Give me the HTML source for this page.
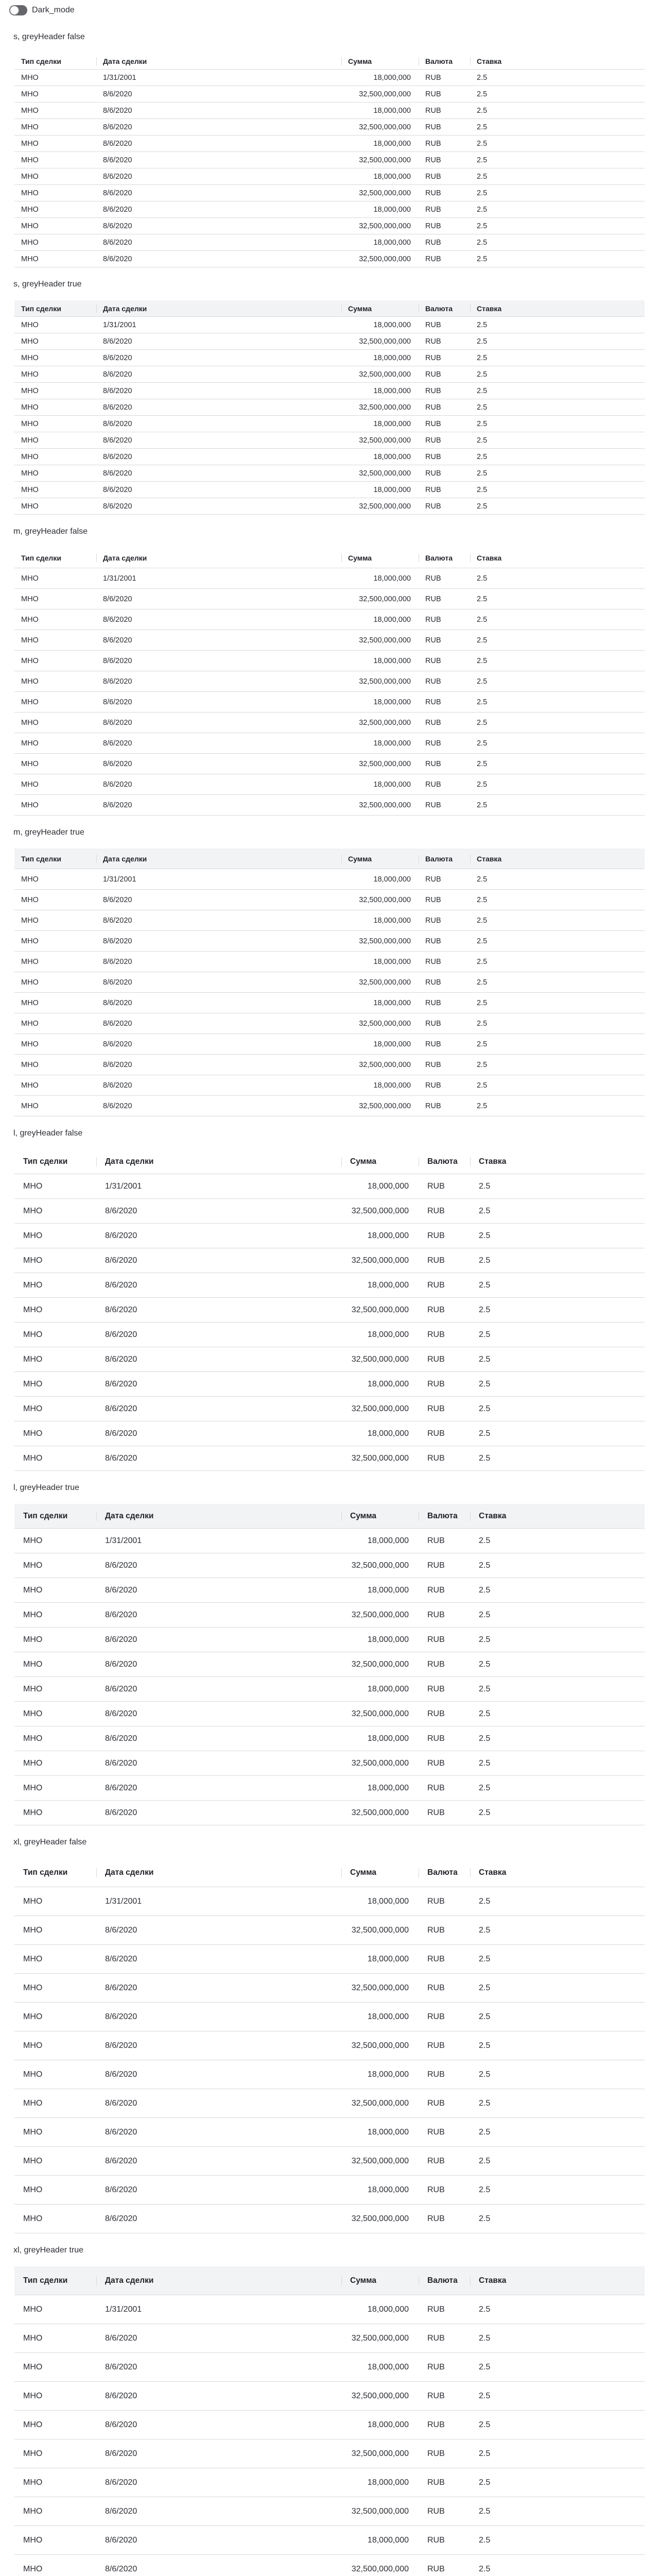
<!DOCTYPE html>
<html><head><meta charset="utf-8">
<style>
*{box-sizing:border-box;margin:0;padding:0}
html,body{width:1280px;height:5148px;overflow:hidden}
body{background:#fff;font-family:"Liberation Sans",sans-serif;color:#2b2d33;position:relative}
.tg{position:absolute;left:18px;top:10px;width:35px;height:20px;border-radius:10px;background:#64666b}
.tg:after{content:"";position:absolute;left:1px;top:1px;width:18px;height:18px;border-radius:50%;background:#fff;border:1px solid #8a8c91;box-sizing:border-box}
.dm{position:absolute;left:62px;top:10px;line-height:20px;font-size:16px;color:#2b2d33}
.sec{position:absolute;left:28px;width:1224px}
.ttl{font-size:16px;line-height:24px;height:24px;margin-left:-2px;color:#2b2d33;white-space:nowrap}
.tb{position:absolute;top:43px;left:0;width:1224px}
.r{display:flex;border-bottom:1px solid #d8d9dc;align-items:center;overflow:hidden}
.r>div{padding-left:13px;white-space:nowrap;position:relative;flex:none;overflow:hidden}
.c1{width:159px}.c2{width:476px}.c3{width:150px;text-align:right;padding-right:15px}.c4{width:100px}.c5{width:339px}
.h{font-weight:bold;color:#1f2126}
.h>div+div:before{content:"";position:absolute;left:0;top:50%;height:16px;margin-top:-8px;border-left:1px solid #d8d9dc}
.h .c3{text-align:left}
.grey .h{background:#f2f3f5}
.s .r{height:32px;font-size:14px}.s .r:not(.h){font-size:14.5px}
.m .r{height:40px;font-size:14px}.m .r:not(.h){font-size:14.5px}
.l .r{height:48px;font-size:15.5px}.l .r:not(.h){font-size:16px}
.xl .r{height:56px;font-size:15.5px}.xl .r:not(.h){font-size:16px}
.l .r>div,.xl .r>div{padding-left:17px}
.l .c3,.xl .c3{padding-right:19px}
.l .h>div+div:before,.xl .h>div+div:before{height:20px;margin-top:-10px}
</style></head><body>
<div class="tg"></div><div class="dm">Dark_mode</div>

<div class="sec s" style="top:60px"><div class="ttl">s, greyHeader false</div><div class="tb">
<div class="r h"><div class="c1">Тип сделки</div><div class="c2">Дата сделки</div><div class="c3">Сумма</div><div class="c4">Валюта</div><div class="c5">Ставка</div></div>
<div class="r"><div class="c1">МНО</div><div class="c2">1/31/2001</div><div class="c3">18,000,000</div><div class="c4">RUB</div><div class="c5">2.5</div></div>
<div class="r"><div class="c1">МНО</div><div class="c2">8/6/2020</div><div class="c3">32,500,000,000</div><div class="c4">RUB</div><div class="c5">2.5</div></div>
<div class="r"><div class="c1">МНО</div><div class="c2">8/6/2020</div><div class="c3">18,000,000</div><div class="c4">RUB</div><div class="c5">2.5</div></div>
<div class="r"><div class="c1">МНО</div><div class="c2">8/6/2020</div><div class="c3">32,500,000,000</div><div class="c4">RUB</div><div class="c5">2.5</div></div>
<div class="r"><div class="c1">МНО</div><div class="c2">8/6/2020</div><div class="c3">18,000,000</div><div class="c4">RUB</div><div class="c5">2.5</div></div>
<div class="r"><div class="c1">МНО</div><div class="c2">8/6/2020</div><div class="c3">32,500,000,000</div><div class="c4">RUB</div><div class="c5">2.5</div></div>
<div class="r"><div class="c1">МНО</div><div class="c2">8/6/2020</div><div class="c3">18,000,000</div><div class="c4">RUB</div><div class="c5">2.5</div></div>
<div class="r"><div class="c1">МНО</div><div class="c2">8/6/2020</div><div class="c3">32,500,000,000</div><div class="c4">RUB</div><div class="c5">2.5</div></div>
<div class="r"><div class="c1">МНО</div><div class="c2">8/6/2020</div><div class="c3">18,000,000</div><div class="c4">RUB</div><div class="c5">2.5</div></div>
<div class="r"><div class="c1">МНО</div><div class="c2">8/6/2020</div><div class="c3">32,500,000,000</div><div class="c4">RUB</div><div class="c5">2.5</div></div>
<div class="r"><div class="c1">МНО</div><div class="c2">8/6/2020</div><div class="c3">18,000,000</div><div class="c4">RUB</div><div class="c5">2.5</div></div>
<div class="r"><div class="c1">МНО</div><div class="c2">8/6/2020</div><div class="c3">32,500,000,000</div><div class="c4">RUB</div><div class="c5">2.5</div></div>
</div></div>

<div class="sec s grey" style="top:540px"><div class="ttl">s, greyHeader true</div><div class="tb">
<div class="r h"><div class="c1">Тип сделки</div><div class="c2">Дата сделки</div><div class="c3">Сумма</div><div class="c4">Валюта</div><div class="c5">Ставка</div></div>
<div class="r"><div class="c1">МНО</div><div class="c2">1/31/2001</div><div class="c3">18,000,000</div><div class="c4">RUB</div><div class="c5">2.5</div></div>
<div class="r"><div class="c1">МНО</div><div class="c2">8/6/2020</div><div class="c3">32,500,000,000</div><div class="c4">RUB</div><div class="c5">2.5</div></div>
<div class="r"><div class="c1">МНО</div><div class="c2">8/6/2020</div><div class="c3">18,000,000</div><div class="c4">RUB</div><div class="c5">2.5</div></div>
<div class="r"><div class="c1">МНО</div><div class="c2">8/6/2020</div><div class="c3">32,500,000,000</div><div class="c4">RUB</div><div class="c5">2.5</div></div>
<div class="r"><div class="c1">МНО</div><div class="c2">8/6/2020</div><div class="c3">18,000,000</div><div class="c4">RUB</div><div class="c5">2.5</div></div>
<div class="r"><div class="c1">МНО</div><div class="c2">8/6/2020</div><div class="c3">32,500,000,000</div><div class="c4">RUB</div><div class="c5">2.5</div></div>
<div class="r"><div class="c1">МНО</div><div class="c2">8/6/2020</div><div class="c3">18,000,000</div><div class="c4">RUB</div><div class="c5">2.5</div></div>
<div class="r"><div class="c1">МНО</div><div class="c2">8/6/2020</div><div class="c3">32,500,000,000</div><div class="c4">RUB</div><div class="c5">2.5</div></div>
<div class="r"><div class="c1">МНО</div><div class="c2">8/6/2020</div><div class="c3">18,000,000</div><div class="c4">RUB</div><div class="c5">2.5</div></div>
<div class="r"><div class="c1">МНО</div><div class="c2">8/6/2020</div><div class="c3">32,500,000,000</div><div class="c4">RUB</div><div class="c5">2.5</div></div>
<div class="r"><div class="c1">МНО</div><div class="c2">8/6/2020</div><div class="c3">18,000,000</div><div class="c4">RUB</div><div class="c5">2.5</div></div>
<div class="r"><div class="c1">МНО</div><div class="c2">8/6/2020</div><div class="c3">32,500,000,000</div><div class="c4">RUB</div><div class="c5">2.5</div></div>
</div></div>

<div class="sec m" style="top:1020px"><div class="ttl">m, greyHeader false</div><div class="tb">
<div class="r h"><div class="c1">Тип сделки</div><div class="c2">Дата сделки</div><div class="c3">Сумма</div><div class="c4">Валюта</div><div class="c5">Ставка</div></div>
<div class="r"><div class="c1">МНО</div><div class="c2">1/31/2001</div><div class="c3">18,000,000</div><div class="c4">RUB</div><div class="c5">2.5</div></div>
<div class="r"><div class="c1">МНО</div><div class="c2">8/6/2020</div><div class="c3">32,500,000,000</div><div class="c4">RUB</div><div class="c5">2.5</div></div>
<div class="r"><div class="c1">МНО</div><div class="c2">8/6/2020</div><div class="c3">18,000,000</div><div class="c4">RUB</div><div class="c5">2.5</div></div>
<div class="r"><div class="c1">МНО</div><div class="c2">8/6/2020</div><div class="c3">32,500,000,000</div><div class="c4">RUB</div><div class="c5">2.5</div></div>
<div class="r"><div class="c1">МНО</div><div class="c2">8/6/2020</div><div class="c3">18,000,000</div><div class="c4">RUB</div><div class="c5">2.5</div></div>
<div class="r"><div class="c1">МНО</div><div class="c2">8/6/2020</div><div class="c3">32,500,000,000</div><div class="c4">RUB</div><div class="c5">2.5</div></div>
<div class="r"><div class="c1">МНО</div><div class="c2">8/6/2020</div><div class="c3">18,000,000</div><div class="c4">RUB</div><div class="c5">2.5</div></div>
<div class="r"><div class="c1">МНО</div><div class="c2">8/6/2020</div><div class="c3">32,500,000,000</div><div class="c4">RUB</div><div class="c5">2.5</div></div>
<div class="r"><div class="c1">МНО</div><div class="c2">8/6/2020</div><div class="c3">18,000,000</div><div class="c4">RUB</div><div class="c5">2.5</div></div>
<div class="r"><div class="c1">МНО</div><div class="c2">8/6/2020</div><div class="c3">32,500,000,000</div><div class="c4">RUB</div><div class="c5">2.5</div></div>
<div class="r"><div class="c1">МНО</div><div class="c2">8/6/2020</div><div class="c3">18,000,000</div><div class="c4">RUB</div><div class="c5">2.5</div></div>
<div class="r"><div class="c1">МНО</div><div class="c2">8/6/2020</div><div class="c3">32,500,000,000</div><div class="c4">RUB</div><div class="c5">2.5</div></div>
</div></div>

<div class="sec m grey" style="top:1604px"><div class="ttl">m, greyHeader true</div><div class="tb">
<div class="r h"><div class="c1">Тип сделки</div><div class="c2">Дата сделки</div><div class="c3">Сумма</div><div class="c4">Валюта</div><div class="c5">Ставка</div></div>
<div class="r"><div class="c1">МНО</div><div class="c2">1/31/2001</div><div class="c3">18,000,000</div><div class="c4">RUB</div><div class="c5">2.5</div></div>
<div class="r"><div class="c1">МНО</div><div class="c2">8/6/2020</div><div class="c3">32,500,000,000</div><div class="c4">RUB</div><div class="c5">2.5</div></div>
<div class="r"><div class="c1">МНО</div><div class="c2">8/6/2020</div><div class="c3">18,000,000</div><div class="c4">RUB</div><div class="c5">2.5</div></div>
<div class="r"><div class="c1">МНО</div><div class="c2">8/6/2020</div><div class="c3">32,500,000,000</div><div class="c4">RUB</div><div class="c5">2.5</div></div>
<div class="r"><div class="c1">МНО</div><div class="c2">8/6/2020</div><div class="c3">18,000,000</div><div class="c4">RUB</div><div class="c5">2.5</div></div>
<div class="r"><div class="c1">МНО</div><div class="c2">8/6/2020</div><div class="c3">32,500,000,000</div><div class="c4">RUB</div><div class="c5">2.5</div></div>
<div class="r"><div class="c1">МНО</div><div class="c2">8/6/2020</div><div class="c3">18,000,000</div><div class="c4">RUB</div><div class="c5">2.5</div></div>
<div class="r"><div class="c1">МНО</div><div class="c2">8/6/2020</div><div class="c3">32,500,000,000</div><div class="c4">RUB</div><div class="c5">2.5</div></div>
<div class="r"><div class="c1">МНО</div><div class="c2">8/6/2020</div><div class="c3">18,000,000</div><div class="c4">RUB</div><div class="c5">2.5</div></div>
<div class="r"><div class="c1">МНО</div><div class="c2">8/6/2020</div><div class="c3">32,500,000,000</div><div class="c4">RUB</div><div class="c5">2.5</div></div>
<div class="r"><div class="c1">МНО</div><div class="c2">8/6/2020</div><div class="c3">18,000,000</div><div class="c4">RUB</div><div class="c5">2.5</div></div>
<div class="r"><div class="c1">МНО</div><div class="c2">8/6/2020</div><div class="c3">32,500,000,000</div><div class="c4">RUB</div><div class="c5">2.5</div></div>
</div></div>

<div class="sec l" style="top:2188px"><div class="ttl">l, greyHeader false</div><div class="tb">
<div class="r h"><div class="c1">Тип сделки</div><div class="c2">Дата сделки</div><div class="c3">Сумма</div><div class="c4">Валюта</div><div class="c5">Ставка</div></div>
<div class="r"><div class="c1">МНО</div><div class="c2">1/31/2001</div><div class="c3">18,000,000</div><div class="c4">RUB</div><div class="c5">2.5</div></div>
<div class="r"><div class="c1">МНО</div><div class="c2">8/6/2020</div><div class="c3">32,500,000,000</div><div class="c4">RUB</div><div class="c5">2.5</div></div>
<div class="r"><div class="c1">МНО</div><div class="c2">8/6/2020</div><div class="c3">18,000,000</div><div class="c4">RUB</div><div class="c5">2.5</div></div>
<div class="r"><div class="c1">МНО</div><div class="c2">8/6/2020</div><div class="c3">32,500,000,000</div><div class="c4">RUB</div><div class="c5">2.5</div></div>
<div class="r"><div class="c1">МНО</div><div class="c2">8/6/2020</div><div class="c3">18,000,000</div><div class="c4">RUB</div><div class="c5">2.5</div></div>
<div class="r"><div class="c1">МНО</div><div class="c2">8/6/2020</div><div class="c3">32,500,000,000</div><div class="c4">RUB</div><div class="c5">2.5</div></div>
<div class="r"><div class="c1">МНО</div><div class="c2">8/6/2020</div><div class="c3">18,000,000</div><div class="c4">RUB</div><div class="c5">2.5</div></div>
<div class="r"><div class="c1">МНО</div><div class="c2">8/6/2020</div><div class="c3">32,500,000,000</div><div class="c4">RUB</div><div class="c5">2.5</div></div>
<div class="r"><div class="c1">МНО</div><div class="c2">8/6/2020</div><div class="c3">18,000,000</div><div class="c4">RUB</div><div class="c5">2.5</div></div>
<div class="r"><div class="c1">МНО</div><div class="c2">8/6/2020</div><div class="c3">32,500,000,000</div><div class="c4">RUB</div><div class="c5">2.5</div></div>
<div class="r"><div class="c1">МНО</div><div class="c2">8/6/2020</div><div class="c3">18,000,000</div><div class="c4">RUB</div><div class="c5">2.5</div></div>
<div class="r"><div class="c1">МНО</div><div class="c2">8/6/2020</div><div class="c3">32,500,000,000</div><div class="c4">RUB</div><div class="c5">2.5</div></div>
</div></div>

<div class="sec l grey" style="top:2876px"><div class="ttl">l, greyHeader true</div><div class="tb">
<div class="r h"><div class="c1">Тип сделки</div><div class="c2">Дата сделки</div><div class="c3">Сумма</div><div class="c4">Валюта</div><div class="c5">Ставка</div></div>
<div class="r"><div class="c1">МНО</div><div class="c2">1/31/2001</div><div class="c3">18,000,000</div><div class="c4">RUB</div><div class="c5">2.5</div></div>
<div class="r"><div class="c1">МНО</div><div class="c2">8/6/2020</div><div class="c3">32,500,000,000</div><div class="c4">RUB</div><div class="c5">2.5</div></div>
<div class="r"><div class="c1">МНО</div><div class="c2">8/6/2020</div><div class="c3">18,000,000</div><div class="c4">RUB</div><div class="c5">2.5</div></div>
<div class="r"><div class="c1">МНО</div><div class="c2">8/6/2020</div><div class="c3">32,500,000,000</div><div class="c4">RUB</div><div class="c5">2.5</div></div>
<div class="r"><div class="c1">МНО</div><div class="c2">8/6/2020</div><div class="c3">18,000,000</div><div class="c4">RUB</div><div class="c5">2.5</div></div>
<div class="r"><div class="c1">МНО</div><div class="c2">8/6/2020</div><div class="c3">32,500,000,000</div><div class="c4">RUB</div><div class="c5">2.5</div></div>
<div class="r"><div class="c1">МНО</div><div class="c2">8/6/2020</div><div class="c3">18,000,000</div><div class="c4">RUB</div><div class="c5">2.5</div></div>
<div class="r"><div class="c1">МНО</div><div class="c2">8/6/2020</div><div class="c3">32,500,000,000</div><div class="c4">RUB</div><div class="c5">2.5</div></div>
<div class="r"><div class="c1">МНО</div><div class="c2">8/6/2020</div><div class="c3">18,000,000</div><div class="c4">RUB</div><div class="c5">2.5</div></div>
<div class="r"><div class="c1">МНО</div><div class="c2">8/6/2020</div><div class="c3">32,500,000,000</div><div class="c4">RUB</div><div class="c5">2.5</div></div>
<div class="r"><div class="c1">МНО</div><div class="c2">8/6/2020</div><div class="c3">18,000,000</div><div class="c4">RUB</div><div class="c5">2.5</div></div>
<div class="r"><div class="c1">МНО</div><div class="c2">8/6/2020</div><div class="c3">32,500,000,000</div><div class="c4">RUB</div><div class="c5">2.5</div></div>
</div></div>

<div class="sec xl" style="top:3564px"><div class="ttl">xl, greyHeader false</div><div class="tb">
<div class="r h"><div class="c1">Тип сделки</div><div class="c2">Дата сделки</div><div class="c3">Сумма</div><div class="c4">Валюта</div><div class="c5">Ставка</div></div>
<div class="r"><div class="c1">МНО</div><div class="c2">1/31/2001</div><div class="c3">18,000,000</div><div class="c4">RUB</div><div class="c5">2.5</div></div>
<div class="r"><div class="c1">МНО</div><div class="c2">8/6/2020</div><div class="c3">32,500,000,000</div><div class="c4">RUB</div><div class="c5">2.5</div></div>
<div class="r"><div class="c1">МНО</div><div class="c2">8/6/2020</div><div class="c3">18,000,000</div><div class="c4">RUB</div><div class="c5">2.5</div></div>
<div class="r"><div class="c1">МНО</div><div class="c2">8/6/2020</div><div class="c3">32,500,000,000</div><div class="c4">RUB</div><div class="c5">2.5</div></div>
<div class="r"><div class="c1">МНО</div><div class="c2">8/6/2020</div><div class="c3">18,000,000</div><div class="c4">RUB</div><div class="c5">2.5</div></div>
<div class="r"><div class="c1">МНО</div><div class="c2">8/6/2020</div><div class="c3">32,500,000,000</div><div class="c4">RUB</div><div class="c5">2.5</div></div>
<div class="r"><div class="c1">МНО</div><div class="c2">8/6/2020</div><div class="c3">18,000,000</div><div class="c4">RUB</div><div class="c5">2.5</div></div>
<div class="r"><div class="c1">МНО</div><div class="c2">8/6/2020</div><div class="c3">32,500,000,000</div><div class="c4">RUB</div><div class="c5">2.5</div></div>
<div class="r"><div class="c1">МНО</div><div class="c2">8/6/2020</div><div class="c3">18,000,000</div><div class="c4">RUB</div><div class="c5">2.5</div></div>
<div class="r"><div class="c1">МНО</div><div class="c2">8/6/2020</div><div class="c3">32,500,000,000</div><div class="c4">RUB</div><div class="c5">2.5</div></div>
<div class="r"><div class="c1">МНО</div><div class="c2">8/6/2020</div><div class="c3">18,000,000</div><div class="c4">RUB</div><div class="c5">2.5</div></div>
<div class="r"><div class="c1">МНО</div><div class="c2">8/6/2020</div><div class="c3">32,500,000,000</div><div class="c4">RUB</div><div class="c5">2.5</div></div>
</div></div>

<div class="sec xl grey" style="top:4356px"><div class="ttl">xl, greyHeader true</div><div class="tb">
<div class="r h"><div class="c1">Тип сделки</div><div class="c2">Дата сделки</div><div class="c3">Сумма</div><div class="c4">Валюта</div><div class="c5">Ставка</div></div>
<div class="r"><div class="c1">МНО</div><div class="c2">1/31/2001</div><div class="c3">18,000,000</div><div class="c4">RUB</div><div class="c5">2.5</div></div>
<div class="r"><div class="c1">МНО</div><div class="c2">8/6/2020</div><div class="c3">32,500,000,000</div><div class="c4">RUB</div><div class="c5">2.5</div></div>
<div class="r"><div class="c1">МНО</div><div class="c2">8/6/2020</div><div class="c3">18,000,000</div><div class="c4">RUB</div><div class="c5">2.5</div></div>
<div class="r"><div class="c1">МНО</div><div class="c2">8/6/2020</div><div class="c3">32,500,000,000</div><div class="c4">RUB</div><div class="c5">2.5</div></div>
<div class="r"><div class="c1">МНО</div><div class="c2">8/6/2020</div><div class="c3">18,000,000</div><div class="c4">RUB</div><div class="c5">2.5</div></div>
<div class="r"><div class="c1">МНО</div><div class="c2">8/6/2020</div><div class="c3">32,500,000,000</div><div class="c4">RUB</div><div class="c5">2.5</div></div>
<div class="r"><div class="c1">МНО</div><div class="c2">8/6/2020</div><div class="c3">18,000,000</div><div class="c4">RUB</div><div class="c5">2.5</div></div>
<div class="r"><div class="c1">МНО</div><div class="c2">8/6/2020</div><div class="c3">32,500,000,000</div><div class="c4">RUB</div><div class="c5">2.5</div></div>
<div class="r"><div class="c1">МНО</div><div class="c2">8/6/2020</div><div class="c3">18,000,000</div><div class="c4">RUB</div><div class="c5">2.5</div></div>
<div class="r"><div class="c1">МНО</div><div class="c2">8/6/2020</div><div class="c3">32,500,000,000</div><div class="c4">RUB</div><div class="c5">2.5</div></div>
<div class="r"><div class="c1">МНО</div><div class="c2">8/6/2020</div><div class="c3">18,000,000</div><div class="c4">RUB</div><div class="c5">2.5</div></div>
<div class="r"><div class="c1">МНО</div><div class="c2">8/6/2020</div><div class="c3">32,500,000,000</div><div class="c4">RUB</div><div class="c5">2.5</div></div>
</div></div>
</body></html>
